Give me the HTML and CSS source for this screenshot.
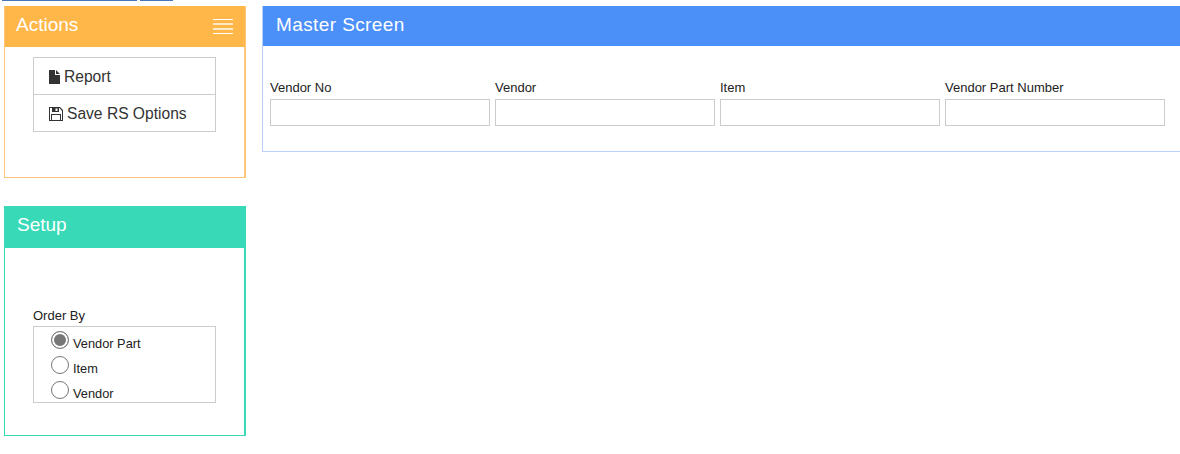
FILE: index.html
```html
<!DOCTYPE html>
<html lang="en">
<head>
<meta charset="utf-8">
<title>Master Screen</title>
<link rel="stylesheet" href="styles.css">
</head>
<body>
<div class="strips"><span class="strip strip-a"></span><span class="strip strip-b"></span></div>
<div class="page">
  <aside class="side">
    <section class="panel panel-actions">
      <header class="panel-head head-actions">
        <h2>Actions</h2>
        <svg class="menu" width="20" height="16" viewBox="0 0 20 16"><rect y="0" width="20" height="1" fill="#fff"/><rect y="4" width="20" height="2" fill="#fff" opacity=".65"/><rect y="9" width="20" height="2" fill="#fff" opacity=".7"/><rect y="14" width="20" height="1" fill="#fff"/></svg>
      </header>
      <div class="actions-body">
        <ul class="action-list">
          <li class="action-item">
            <svg class="ic-file" width="11" height="14" viewBox="0 0 11 14"><path d="M0 0H6V5H11V14H0Z M7 0L11 4H7Z" fill="#333"/></svg>
            <span>Report</span>
          </li>
          <li class="action-item">
            <svg class="ic-save" width="14" height="14" viewBox="0 0 14 14"><path fill="#333" fill-rule="evenodd" d="M0 0H11L14 3V14H0Z M1 1V13H2V7H12V13H13V4L10.500 1H10V5H3V1Z M3 8V13H11V8Z M6.500 1.500V4H8.500V1.500Z"/></svg>
            <span>Save RS Options</span>
          </li>
        </ul>
      </div>
    </section>
    <section class="panel panel-setup">
      <header class="panel-head head-setup"><h2>Setup</h2></header>
      <div class="setup-body">
        <div class="field-label">Order By</div>
        <div class="radio-box">
          <label class="radio-row"><input type="radio" name="order" checked><span>Vendor Part</span></label>
          <label class="radio-row"><input type="radio" name="order"><span>Item</span></label>
          <label class="radio-row"><input type="radio" name="order"><span>Vendor</span></label>
        </div>
      </div>
    </section>
  </aside>
  <main class="master">
    <header class="master-head"><h1>Master Screen</h1></header>
    <div class="filters">
      <div class="filter"><label class="field-label">Vendor No</label><input class="text-input" type="text"></div>
      <div class="filter"><label class="field-label">Vendor</label><input class="text-input" type="text"></div>
      <div class="filter"><label class="field-label">Item</label><input class="text-input" type="text"></div>
      <div class="filter"><label class="field-label">Vendor Part Number</label><input class="text-input" type="text"></div>
    </div>
  </main>
</div>
</body>
</html>
```
FILE: styles.css
```css
* { box-sizing: border-box; }
html, body { margin: 0; padding: 0; background: #fff; overflow: hidden; }
body { font-family: "Liberation Sans", Arial, sans-serif; color: #222; width: 1180px; height: 454px; }
.strips { display: flex; height: 1px; padding-left: 2px; gap: 3px; margin-bottom: 5px; }
.strip { display: block; height: 1px; background: #4a76b8; }
.strip-a { width: 135px; }
.strip-b { width: 33px; }
.page { display: flex; align-items: flex-start; padding-left: 4px; }
.side { width: 242px; flex: none; display: flex; flex-direction: column; gap: 28px; }
.panel { width: 242px; background: #fff; }
.panel-actions { height: 172px; border: solid #ffc67a; border-width: 0 2px 1px 1px; }
.panel-setup { height: 230px; border: solid #38d9b7; border-width: 0 2px 1px 1px; }
.panel-head { display: flex; align-items: center; justify-content: space-between; color: #fff; }
.panel-head h2 { margin: 0 0 4px; font-size: 19px; font-weight: 400; line-height: 24px; }
.head-actions { height: 41px; margin: 0 -1px 0 0; padding: 0 12px 0 11px; background: #ffb74a; }
.head-setup { height: 42px; margin: 0 -2px 0 -1px; padding: 0 13px 0 13px; background: #38d9b7; }
.menu { display: block; }
.actions-body { padding: 10px 28px 0; }
.action-list { list-style: none; margin: 0; padding: 0; width: 183px; border: 1px solid #ccc; }
.action-item { display: flex; align-items: center; height: 37px; padding: 2px 0 0 15px; font-size: 15.6px; color: #333; }
.action-item:first-child { height: 36px; }
.action-item + .action-item { border-top: 1px solid #ccc; }
.ic-file { margin-right: 4px; flex: none; }
.ic-save { margin-right: 4px; flex: none; }
.setup-body { padding: 61px 28px 0; }
.field-label { display: block; font-size: 13px; line-height: 14px; color: #222; }
.setup-body .field-label { margin-bottom: 3px; }
.radio-box { width: 183px; height: 77px; border: 1px solid #ccc; padding: 4px 0 0 17px; overflow: hidden; }
.radio-row { display: flex; height: 25px; align-items: flex-start; font-size: 12.8px; line-height: 14px; color: #222; }
.radio-row span { margin: 6px 0 0 4px; }
.radio-row input { appearance: none; -webkit-appearance: none; width: 18px; height: 18px; margin: 0; border: 1px solid #777; border-radius: 50%; background: #fff; flex: none; }
.radio-row input:checked { background: #777; box-shadow: inset 0 0 0 2px #fff; }
.master { flex: none; width: 918px; height: 146px; margin-left: 16px; border: solid #b9d0f8; border-width: 0 0 1px 1px; }
.master-head { height: 40px; padding-left: 13px; display: flex; align-items: center; background: #4b8ff9; color: #fff; }
.master-head h1 { margin: 0 0 2px; font-size: 19px; font-weight: 400; line-height: 24px; letter-spacing: .4px; }
.filters { display: flex; gap: 5px; padding: 35px 0 0 7px; }
.filter { width: 220px; }
.filter .field-label { margin-bottom: 4px; }
.text-input { display: block; width: 220px; height: 27px; border: 1px solid #ccc; background: #fff; padding: 0 4px; }
```
